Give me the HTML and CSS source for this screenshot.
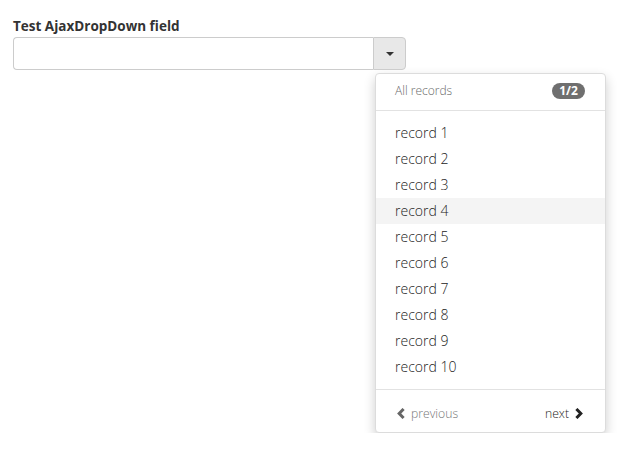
FILE: index.html
```html
<!DOCTYPE html>
<html>
<head>
<meta charset="utf-8">
<link rel="stylesheet" href="styles.css">
</head>
<body>
<div class="field">
  <div class="label">Test AjaxDropDown field</div>
  <div class="input-group">
    <div class="input"></div>
    <div class="btn"><span class="caret"></span></div>
  </div>
  <div class="menu">
    <div class="menu-header">
      <span class="menu-title">All records</span>
      <span class="badge">1/2</span>
    </div>
    <div class="menu-list">
      <div class="item">record 1</div>
      <div class="item">record 2</div>
      <div class="item">record 3</div>
      <div class="item active">record 4</div>
      <div class="item">record 5</div>
      <div class="item">record 6</div>
      <div class="item">record 7</div>
      <div class="item">record 8</div>
      <div class="item">record 9</div>
      <div class="item">record 10</div>
    </div>
    <div class="menu-footer">
      <span class="prev"><svg width="8" height="11" viewBox="0 0 8 11"><path d="M6.6 1 L2.2 5.5 L6.6 10" fill="none" stroke="currentColor" stroke-width="3"/></svg>previous</span>
      <span class="next">next<svg width="8" height="11" viewBox="0 0 8 11"><path d="M1.4 1 L5.8 5.5 L1.4 10" fill="none" stroke="currentColor" stroke-width="3"/></svg></span>
    </div>
  </div>
</div>
</body>
</html>
```
FILE: styles.css
```css
* { box-sizing: border-box; }
body {
  margin: 0;
  background: #fff;
  font-family: "Open Sans", "DejaVu Sans", sans-serif;
  color: #333;
}
.field {
  margin: 16px 0 0 13px;
  width: 593px;
}
.label {
  font-weight: bold;
  font-size: 13.5px;
  line-height: 20px;
  color: #333;
  margin-bottom: 1px;
}
.input-group {
  display: flex;
  height: 33px;
  width: 393px;
}
.input {
  flex: 1;
  border: 1px solid #ccc;
  border-right: none;
  border-radius: 4px 0 0 4px;
  background: #fff;
}
.btn {
  width: 33px;
  border: 1px solid #ccc;
  border-radius: 0 4px 4px 0;
  background: #e8e8e8;
  display: flex;
  align-items: center;
  justify-content: center;
}
.caret {
  width: 0;
  height: 0;
  border-left: 4px solid transparent;
  border-right: 4px solid transparent;
  border-top: 4px solid #333;
  margin-top: 1px;
}
.menu {
  margin: 3px 0 0 362px;
  width: 231px;
  background: #fff;
  border: 1px solid #dcdcdc;
  border-radius: 4px;
  box-shadow: 0 5px 12px rgba(0,0,0,0.2);
}
.menu-header {
  height: 37px;
  display: flex;
  align-items: flex-start;
  justify-content: space-between;
  padding: 8px 20px 0 19px;
  border-bottom: 1px solid #e2e2e2;
}
.menu-title {
  font-size: 12px;
  line-height: 17px;
  color: #6a6a6a;
  font-weight: 300;
}
.badge {
  background: #6f6f6f;
  color: #fff;
  font-size: 12px;
  font-weight: bold;
  border-radius: 8px;
  width: 33px;
  text-align: center;
  line-height: 16px;
  margin-top: 1px;
}
.menu-list {
  padding: 9px 0;
  border-bottom: 1px solid #e2e2e2;
}
.item {
  height: 26px;
  line-height: 26px;
  padding-left: 19px;
  font-size: 14px;
  font-weight: 300;
  color: #222;
}
.item.active { background: #f4f4f4; }
.menu-footer {
  height: 42px;
  display: flex;
  align-items: center;
  justify-content: space-between;
  padding: 4px 22px 0 21px;
  font-size: 12.2px;
  font-weight: 300;
}
.prev { color: #777; display: flex; align-items: center; gap: 6px; }
.prev svg { color: #666; }
.next { color: #222; display: flex; align-items: center; gap: 6px; }
```
